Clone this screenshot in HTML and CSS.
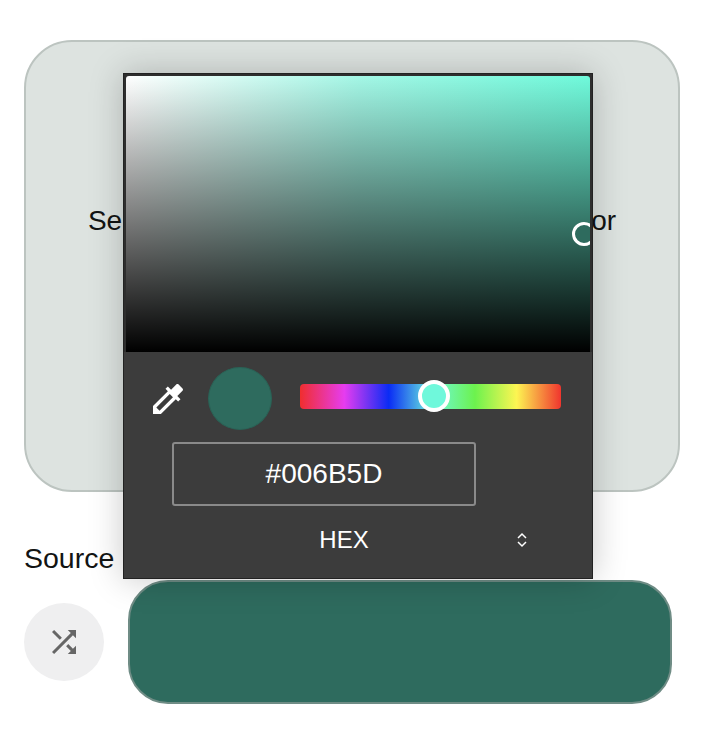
FILE: index.html
```html
<!DOCTYPE html>
<html lang="en">
<head>
<meta charset="utf-8">
<title>Source color</title>
<link rel="stylesheet" href="styles.css">
</head>
<body>
<main class="page">
  <section class="drop-card">
    <p class="drop-text">Select an image to extract the source color</p>
  </section>
  <h2 class="source-label">Source</h2>
  <div class="source-row">
    <button class="shuffle" type="button" aria-label="Shuffle">
      <svg class="shuffle-icon" viewBox="0 0 24 24"><path d="M10.59 9.17L5.41 4 4 5.41l5.17 5.17 1.42-1.41zM14.5 4l2.04 2.04L4 18.59 5.41 20 17.96 7.46 20 9.5V4h-5.5zm.33 9.41l-1.41 1.41 3.13 3.13L14.5 20H20v-5.5l-2.04 2.04-3.13-3.13z"/></svg>
    </button>
    <div class="swatch"></div>
  </div>
</main>
<div class="picker">
  <div class="sat-frame">
    <div class="sat">
      <span class="sat-handle"></span>
    </div>
  </div>
  <div class="controls">
    <svg class="dropper" viewBox="0 0 24 24"><path d="M20.71 5.63l-2.34-2.34c-.39-.39-1.02-.39-1.41 0l-3.12 3.12-1.93-1.91-1.41 1.41 1.42 1.42L3 16.25V21h4.75l8.92-8.92 1.42 1.42 1.41-1.41-1.92-1.92 3.12-3.12c.4-.4.4-1.03.01-1.42zM6.92 19L5 17.08l8.06-8.06 1.92 1.92L6.92 19z"/></svg>
    <span class="preview"></span>
    <div class="hue"><span class="hue-thumb"></span></div>
  </div>
  <div class="hex-box">#006B5D</div>
  <div class="format">
    <span class="format-name">HEX</span>
    <svg class="format-icon" viewBox="0 0 12 16"><polyline points="2,6 6,2 10,6"/><polyline points="2,10 6,14 10,10"/></svg>
  </div>
</div>
</body>
</html>
```
FILE: styles.css
```css
* { box-sizing: border-box; }
html, body { margin: 0; padding: 0; }
body {
  width: 706px;
  height: 740px;
  overflow: hidden;
  background: #fff;
  font-family: "Liberation Sans", Arial, sans-serif;
  color: #121413;
  position: relative;
}
.page { padding: 40px 26px 0 24px; }
.drop-card {
  height: 452px;
  background: #dde3e0;
  border: 2px solid #bcc4c0;
  border-radius: 48px;
  padding-top: 162px;
}
.drop-text {
  margin: 0;
  font-size: 28px;
  line-height: 34px;
  text-align: center;
  white-space: nowrap;
  letter-spacing: -0.06px;
}
.source-label {
  margin: 49px 0 0;
  font-size: 28.5px;
  line-height: 34px;
  font-weight: 400;
}
.source-row {
  display: flex;
  align-items: center;
  gap: 24px;
  margin-top: 5px;
}
.shuffle {
  width: 80px;
  height: 78px;
  border: 0;
  padding: 0;
  border-radius: 50%;
  background: #efeff0;
  display: flex;
  align-items: center;
  justify-content: center;
}
.shuffle-icon { width: 36px; height: 36px; fill: #666; }
.swatch {
  width: 544px;
  height: 124px;
  margin-right: -16px;
  background: #2e6b5e;
  border: 2px solid #6f8c85;
  border-radius: 40px;
}
.picker {
  position: absolute;
  left: 123px;
  top: 73px;
  width: 470px;
  height: 506px;
  background: #3c3c3c;
  border: 1px solid #222;
  box-shadow: 0 0 32px rgba(0, 0, 0, 0.22);
}
.sat-frame {
  padding: 2px 2px 0;
  background: #2e2e2e;
}
.sat {
  position: relative;
  height: 276px;
  overflow: hidden;
  border-radius: 3px 3px 0 0;
  background:
    linear-gradient(to top, #000, rgba(0, 0, 0, 0)),
    linear-gradient(to right, #fff, #a4f7e6 50%, #6ffadb);
}
.sat-handle {
  position: absolute;
  left: 446px;
  top: 146px;
  width: 24px;
  height: 24px;
  border: 3px solid #fff;
  border-radius: 50%;
  background: #2e6b5e;
}
.controls {
  display: flex;
  align-items: center;
  padding-left: 24px;
  margin-top: 15px;
}
.dropper { width: 40px; height: 40px; fill: #fff; }
.preview {
  width: 64px;
  height: 63px;
  margin-left: 20px;
  border-radius: 50%;
  background: #2e6b5e;
  border: 1px solid #2a6256;
}
.hue {
  position: relative;
  width: 261px;
  height: 25px;
  margin-left: 28px;
  margin-top: -5px;
  border-radius: 4px;
  background: linear-gradient(to right, #f02e2e 0%, #e63cf0 17%, #0a2cf5 34%, #6ff8db 51%, #6cf24e 67%, #fdf552 83%, #f0352e 100%);
}
.hue-thumb {
  position: absolute;
  left: 118px;
  top: -4px;
  width: 32px;
  height: 32px;
  border: 4px solid #fff;
  border-radius: 50%;
  background: #6ff8db;
}
.hex-box {
  width: 304px;
  height: 64px;
  margin: 12px 0 0 48px;
  border: 2px solid #8a8a8a;
  border-radius: 3px;
  color: #fff;
  font-size: 28px;
  line-height: 60px;
  text-align: center;
}
.format {
  display: flex;
  align-items: center;
  height: 67px;
  margin-left: 48px;
  color: #fff;
}
.format-name {
  width: 344px;
  font-size: 24px;
  text-align: center;
}
.format-icon {
  width: 12px;
  height: 16px;
  margin-left: 0;
  fill: none;
  stroke: #fff;
  stroke-width: 1.5;
}
```
